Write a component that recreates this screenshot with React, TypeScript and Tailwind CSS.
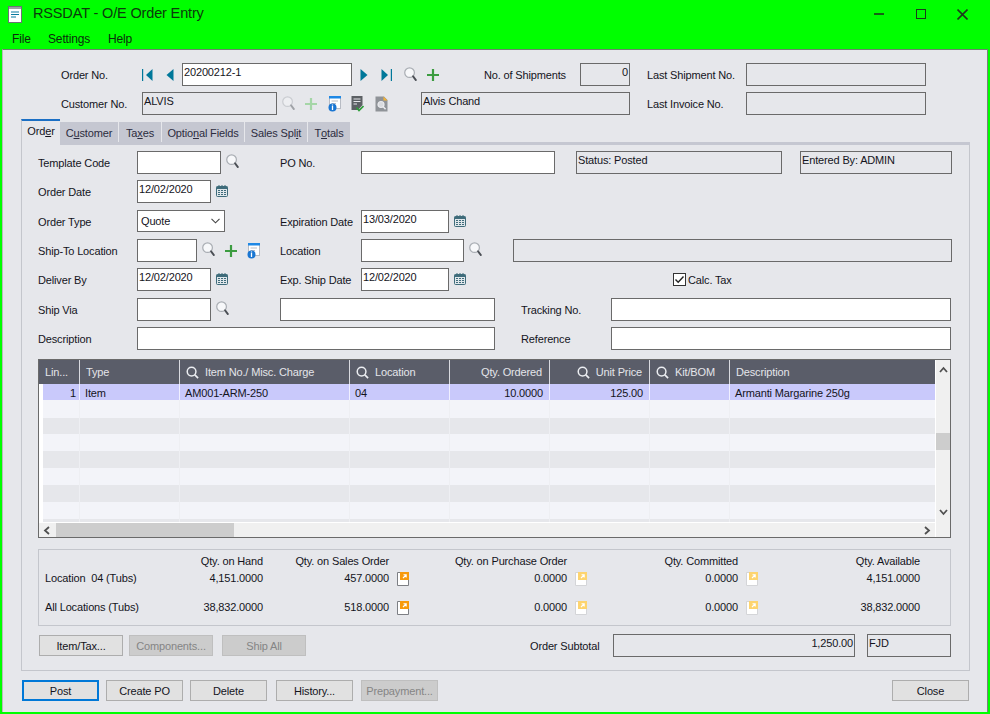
import React from "react";

const Search = ({ dim = false, className = "" }: { dim?: boolean; className?: string }) => (
  <svg width="13" height="15" viewBox="0 0 14 16" className={`shrink-0 ${className}`} style={{ opacity: dim ? 0.45 : 1 }}>
    <circle cx="6" cy="6" r="5.2" fill="#f7f8fa" stroke="#a9adb3" strokeWidth="1.3" />
    <path d="M9.8 10 L12.8 14" stroke="#4b4f55" strokeWidth="2" strokeLinecap="round" />
  </svg>
);
const Plus = ({ dim = false, className = "" }: { dim?: boolean; className?: string }) => (
  <svg width="12" height="12" viewBox="0 0 12 12" className={`shrink-0 ${className}`}>
    <path d="M6 0V12M0 6H12" stroke={dim ? "#a5d6a7" : "#3c9c40"} strokeWidth="2.2" />
  </svg>
);
const Info = ({ className = "" }: { className?: string }) => (
  <svg width="13" height="16" viewBox="0 0 13 16" className={`shrink-0 ${className}`}>
    <rect x="1.5" y="0.5" width="11" height="12" fill="#fff" stroke="#b8bcc4" />
    <rect x="1" y="0" width="12" height="2.5" fill="#1e88e5" />
    <path d="M3.5 5H10M3.5 7.5H8" stroke="#b9bdc4" />
    <circle cx="4.5" cy="11.5" r="4" fill="#1976d2" />
    <path d="M4.5 10V14M4.5 8.6V9.4" stroke="#fff" strokeWidth="1.3" />
  </svg>
);
const DocCheck = ({ className = "" }: { className?: string }) => (
  <svg width="13" height="16" viewBox="0 0 13 16" className={`shrink-0 ${className}`}>
    <path d="M0.5 0H11.5V9L7 14H0.5Z" fill="#5c6064" />
    <path d="M2.5 3H9.5M2.5 5.5H9.5M2.5 8H6" stroke="#e6e7eb" />
    <path d="M5.5 11.5L8 14.5L12.5 10" fill="none" stroke="#2e9e3a" strokeWidth="1.6" />
  </svg>
);
const DocSearch = ({ className = "" }: { className?: string }) => (
  <svg width="13" height="16" viewBox="0 0 13 16" className={`shrink-0 ${className}`}>
    <path d="M0.5 0.5H9L12.5 4V15.5H0.5Z" fill="#8f9398" />
    <path d="M8.5 0.5L12.5 4.5H8.5Z" fill="#f5b335" />
    <circle cx="6" cy="8.5" r="3" fill="#d9dbdf" stroke="#e9eaee" strokeWidth="1.2" />
    <path d="M8.2 10.8L10.6 13.2" stroke="#e9eaee" strokeWidth="1.6" />
  </svg>
);
const Calendar = ({ className = "" }: { className?: string }) => (
  <svg width="12" height="12" viewBox="0 0 12 12" className={`shrink-0 -mt-[2px] ${className}`}>
    <rect x="0.5" y="1.5" width="11" height="10" rx="1" fill="#dfe6ea" stroke="#3f6c7b" />
    <rect x="0.5" y="1.5" width="11" height="2.5" fill="#3f6c7b" />
    <path d="M3 0V2M6 0V2M9 0V2" stroke="#3f6c7b" />
    <path d="M2 5.5H4M5 5.5H7M8 5.5H10M2 7.5H4M5 7.5H7M8 7.5H10M2 9.5H4M5 9.5H7M8 9.5H10" stroke="#3f6c7b" />
  </svg>
);
const DocLink = ({ dim = false, className = "" }: { dim?: boolean; className?: string }) => (
  <svg width="12" height="14" viewBox="0 0 12 14" className={`shrink-0 ${className}`}>
    <path d="M0.5 0.5H11.5V13.5H0.5Z" fill="#fff" stroke={dim ? "#d4d5d8" : "#7d7f84"} />
    <rect x="3" y="0" width="9" height="8" fill={dim ? "#fdd46f" : "#f79a0c"} />
    <path d="M6 6L9 3M6.5 2.8H9.2V5.5" fill="none" stroke="#fff" strokeWidth="1.1" />
  </svg>
);
const Nav = ({ dir, bar = false, className = "" }: { dir: "l" | "r"; bar?: boolean; className?: string }) => (
  <svg width={bar ? 11 : 8} height="12" viewBox={bar ? "0 0 11 12" : "0 0 8 12"} className={`shrink-0 ${className}`}>
    {dir === "l" ? (
      bar ? (
        <>
          <rect x="0" y="0" width="1.2" height="12" fill="#00789a" />
          <path d="M10.5 0V12L4 6Z" fill="#00789a" />
        </>
      ) : (
        <path d="M7.5 0V12L0.5 6Z" fill="#00789a" />
      )
    ) : bar ? (
      <>
        <rect x="9.8" y="0" width="1.2" height="12" fill="#00789a" />
        <path d="M0.5 0V12L7 6Z" fill="#00789a" />
      </>
    ) : (
      <path d="M0.5 0V12L7.5 6Z" fill="#00789a" />
    )}
  </svg>
);

const Lbl = ({ className = "", children }: { className?: string; children?: React.ReactNode }) => (
  <div className={`shrink-0 h-[23px] pt-[2px] flex items-center whitespace-nowrap ${className}`}>{children}</div>
);
const Inp = ({ className = "", children }: { className?: string; children?: React.ReactNode }) => (
  <div className={`shrink-0 h-[23px] border border-[#6a6a6a] bg-white pl-[1px] leading-[17px] whitespace-nowrap overflow-hidden ${className}`}>{children}</div>
);
const RO = ({ className = "", children }: { className?: string; children?: React.ReactNode }) => (
  <div className={`shrink-0 h-[23px] border border-[#6a6a6a] pl-[1px] leading-[17px] whitespace-nowrap overflow-hidden ${className}`}>{children}</div>
);
const Btn = ({ className = "", off = false, focus = false, children }: { className?: string; off?: boolean; focus?: boolean; children?: React.ReactNode }) => (
  <div className={`shrink-0 w-[77px] h-[21px] pt-[2px] flex items-center justify-center whitespace-nowrap ${focus ? "bg-[#e1e1e1] border-2 border-[#0078d7]" : off ? "bg-[#cccccc] border border-[#bfbfbf] text-[#858585]" : "bg-[#e1e1e1] border border-[#adadad]"} ${className}`}>{children}</div>
);
const Tab = ({ className = "", children }: { className?: string; children?: React.ReactNode }) => (
  <div className={`shrink-0 h-[23px] pb-[1px] bg-[#c5c7d1] flex items-center justify-center whitespace-nowrap text-[#2c2c3e] ${className}`}>{children}</div>
);

const widths = ["w-[41px]", "w-[100px]", "w-[170px]", "w-[100px]", "w-[100px]", "w-[100px]", "w-[80px]", "w-[205px]"];
const HCell = ({ i, children, right = false, icon = false }: { i: number; children?: React.ReactNode; right?: boolean; icon?: boolean }) => (
  <div className={`${widths[i]} shrink-0 h-full border-r border-[#d9dae0] last:border-r-0 flex items-center text-[#e4e5ea] whitespace-nowrap ${right ? "justify-end pr-[7px]" : "pl-[6px]"}`}>
    {icon && (
      <svg width="13" height="13" viewBox="0 0 14 14" className="mr-[6px] shrink-0">
        <circle cx="6" cy="6" r="4.7" fill="none" stroke="#eceef2" strokeWidth="1.6" />
        <path d="M9.5 9.5L13 13" stroke="#eceef2" strokeWidth="1.8" />
      </svg>
    )}
    {children}
  </div>
);
const Row = ({ bg, h }: { bg: string; h: string }) => (
  <div className={`flex ${h}`}>
    <div className="w-[4px] shrink-0 bg-white" />
    <div className={`flex flex-1 ${bg}`}>
      <div className="w-[37px] shrink-0 border-r border-[#eeeff3]" />
      {[1, 2, 3, 4, 5, 6].map((i) => (
        <div key={i} className={`${widths[i]} shrink-0 border-r border-[#eeeff3]`} />
      ))}
    </div>
  </div>
);

const QtyRow = ({ label, vals, className = "" }: { label: string; vals: string[]; className?: string }) => (
  <div className={`flex h-[15px] items-center ${className}`}>
    <div className="w-[224px] pl-[6px] shrink-0 flex justify-between whitespace-pre">
      <span>{label}</span>
      <span>{vals[0]}</span>
    </div>
    <div className="w-[126px] text-right shrink-0">{vals[1]}</div>
    <DocLink className="ml-[8px]" />
    <div className="w-[158px] text-right shrink-0">{vals[2]}</div>
    <DocLink dim className="ml-[8px]" />
    <div className="w-[151px] text-right shrink-0">{vals[3]}</div>
    <DocLink dim className="ml-[8px]" />
    <div className="w-[162px] text-right shrink-0">{vals[4]}</div>
  </div>
);

export default function App() {
  return (
    <div className="w-[990px] h-[714px] bg-[#00ff00] flex flex-col overflow-hidden text-[11px] tracking-[-0.15px] text-[#14141c] [font-family:Liberation_Sans,Arial,sans-serif]">
      {/* Title */}
      <div className="h-[28px] shrink-0 flex items-center pl-[8px] text-[#0c3a0c]">
        <svg width="14" height="17" viewBox="0 0 14 17" className="shrink-0">
          <rect x="0.5" y="0.5" width="13" height="16" fill="#fff" stroke="#6d7275" />
          <rect x="1" y="1" width="12" height="2" fill="#9aa0a4" />
          <path d="M3 6H11M3 8.5H11M3 11H8" stroke="#0a7aa0" strokeWidth="1.2" />
        </svg>
        <span className="ml-[11px] text-[14.5px] leading-none pb-[1px]">RSSDAT - O/E Order Entry</span>
        <div className="ml-auto flex items-center pr-[22px]">
          <svg width="10" height="10" viewBox="0 0 10 10" className="mr-[32px]"><path d="M0 5H10" stroke="#1c3a1c" strokeWidth="1.6" /></svg>
          <svg width="10" height="10" viewBox="0 0 10 10" className="mr-[31px]"><rect x="0.5" y="0.5" width="9" height="9" fill="none" stroke="#1c3a1c" strokeWidth="1" /></svg>
          <svg width="11" height="11" viewBox="0 0 11 11"><path d="M0.5 0.5L10.5 10.5M10.5 0.5L0.5 10.5" stroke="#1c3a1c" strokeWidth="1.6" /></svg>
        </div>
      </div>
      {/* Menu */}
      <div className="h-[21px] shrink-0 flex items-center pl-[12px] text-[12px] text-[#0c2c0c]">
        <span className="w-[36px]">File</span>
        <span className="w-[60px]">Settings</span>
        <span>Help</span>
      </div>
      {/* Client */}
      <div className="h-[663px] ml-[2px] mr-[2px] shrink-0 bg-[#e6e7eb] border-t border-l border-r border-t-[#6f7f6f] border-l-[#b8bcb8] border-r-[#7c807c] flex flex-col">
        {/* Header row 1 */}
        <div className="flex mt-[13px] pl-[58px]">
          <Lbl className="w-[81px]">Order No.</Lbl>
          <div className="flex items-center h-[23px]">
            <Nav dir="l" bar />
            <Nav dir="l" className="ml-[13px]" />
          </div>
          <Inp className="ml-[8px] w-[170px]">20200212-1</Inp>
          <div className="flex items-center h-[23px]">
            <Nav dir="r" className="ml-[8px]" />
            <Nav dir="r" bar className="ml-[13px]" />
            <Search className="ml-[12px]" />
            <Plus className="ml-[10px]" />
          </div>
          <Lbl className="ml-[45px] w-[96px]">No. of Shipments</Lbl>
          <RO className="w-[50px] text-right pr-[1px]">0</RO>
          <Lbl className="ml-[17px] w-[99px]">Last Shipment No.</Lbl>
          <RO className="w-[180px]" />
        </div>
        {/* Header row 2 */}
        <div className="flex mt-[6px] pl-[58px]">
          <Lbl className="w-[81px]">Customer No.</Lbl>
          <RO className="w-[135px]">ALVIS</RO>
          <div className="flex items-center h-[23px]">
            <Search dim className="ml-[5px]" />
            <Plus dim className="ml-[10px]" />
            <Info className="ml-[11px]" />
            <DocCheck className="ml-[10px]" />
            <DocSearch className="ml-[11px]" />
          </div>
          <RO className="ml-[33px] w-[209px]">Alvis Chand</RO>
          <Lbl className="ml-[17px] w-[99px]">Last Invoice No.</Lbl>
          <RO className="w-[180px]" />
        </div>
        {/* Tabs */}
        <div className="flex items-end h-[26px] mt-[4px] ml-[18px] w-[949px]">
          <div className="w-[39px] h-[26px] pb-[3px] shrink-0 border-t-2 border-t-[#1b6fc4] border-l border-l-[#c4c6cc] flex items-center justify-center">
            <span>Ord<span className="underline">e</span>r</span>
          </div>
          <div className="flex-1 flex flex-col">
            <div className="flex items-start gap-[1px]">
              <Tab className="w-[58px]">C<span className="underline">u</span>stomer</Tab>
              <Tab className="w-[42px]">Ta<span className="underline">x</span>es</Tab>
              <Tab className="w-[82px]">Optio<span className="underline">n</span>al Fields</Tab>
              <Tab className="w-[62px]">Sales Spl<span className="underline">i</span>t</Tab>
              <Tab className="w-[42px]">T<span className="underline">o</span>tals</Tab>
            </div>
            <div className="h-[3px] bg-[#c5c7d1] -mt-[3px]" />
          </div>
        </div>
        {/* Panel */}
        <div className="ml-[18px] w-[949px] h-[526px] shrink-0 border-l border-r border-b border-[#c4c6cc] flex flex-col">
          <div className="flex mt-[6px] pl-[16px]">
            <Lbl className="w-[99px]">Template Code</Lbl>
            <Inp className="w-[84px]" />
            <div className="h-[23px] flex items-center w-[59px]"><Search className="ml-[5px] -mt-[2px]" /></div>
            <Lbl className="w-[81px]">PO No.</Lbl>
            <Inp className="w-[194px]" />
            <RO className="ml-[21px] w-[206px]">Status: Posted</RO>
            <RO className="ml-[18px] w-[152px]">Entered By: ADMIN</RO>
          </div>
          <div className="flex mt-[6px] pl-[16px]">
            <Lbl className="w-[99px]">Order Date</Lbl>
            <Inp className="w-[74px]">12/02/2020</Inp>
            <div className="h-[23px] flex items-center"><Calendar className="ml-[5px]" /></div>
          </div>
          <div className="flex mt-[7px] pl-[16px]">
            <Lbl className="w-[99px]">Order Type</Lbl>
            <div className="w-[88px] h-[22px] shrink-0 border border-[#6a6a6a] bg-white flex items-center justify-between pl-[3px] pr-[4px]">
              <span>Quote</span>
              <svg width="9" height="6" viewBox="0 0 9 6"><path d="M0.5 0.8L4.5 4.8L8.5 0.8" fill="none" stroke="#444" strokeWidth="1.1" /></svg>
            </div>
            <Lbl className="ml-[55px] w-[81px]">Expiration Date</Lbl>
            <Inp className="w-[88px]">13/03/2020</Inp>
            <div className="h-[23px] flex items-center"><Calendar className="ml-[5px]" /></div>
          </div>
          <div className="flex mt-[6px] pl-[16px]">
            <Lbl className="w-[99px]">Ship-To Location</Lbl>
            <Inp className="w-[60px]" />
            <div className="h-[23px] flex items-center w-[83px]">
              <Search className="ml-[5px] -mt-[2px]" />
              <Plus className="ml-[10px]" />
              <Info className="ml-[10px]" />
            </div>
            <Lbl className="w-[81px]">Location</Lbl>
            <Inp className="w-[103px]" />
            <div className="h-[23px] flex items-center w-[49px]"><Search className="ml-[5px] -mt-[2px]" /></div>
            <RO className="w-[439px]" />
          </div>
          <div className="flex mt-[6px] pl-[16px]">
            <Lbl className="w-[99px]">Deliver By</Lbl>
            <Inp className="w-[74px]">12/02/2020</Inp>
            <div className="h-[23px] flex items-center w-[69px]"><Calendar className="ml-[5px]" /></div>
            <Lbl className="w-[81px]">Exp. Ship Date</Lbl>
            <Inp className="w-[88px]">12/02/2020</Inp>
            <div className="h-[23px] flex items-center w-[224px]"><Calendar className="ml-[5px]" /></div>
            <div className="h-[23px] flex items-center">
              <svg width="13" height="13" viewBox="0 0 13 13" className="shrink-0">
                <rect x="0.5" y="0.5" width="12" height="12" fill="#fff" stroke="#333" />
                <path d="M2.5 6.5L5.2 9.3L10.5 3.5" fill="none" stroke="#222" strokeWidth="1.4" />
              </svg>
              <span className="ml-[2px] pt-[1px] whitespace-nowrap">Calc. Tax</span>
            </div>
          </div>
          <div className="flex mt-[7px] pl-[16px]">
            <Lbl className="w-[99px]">Ship Via</Lbl>
            <Inp className="w-[74px]" />
            <div className="h-[23px] flex items-center w-[69px]"><Search className="ml-[5px] -mt-[2px]" /></div>
            <Inp className="w-[215px]" />
            <Lbl className="ml-[26px] w-[90px]">Tracking No.</Lbl>
            <Inp className="w-[340px]" />
          </div>
          <div className="flex mt-[6px] pl-[16px]">
            <Lbl className="w-[99px]">Description</Lbl>
            <Inp className="w-[358px]" />
            <Lbl className="ml-[26px] w-[90px]">Reference</Lbl>
            <Inp className="w-[340px]" />
          </div>
          {/* Table */}
          <div className="mt-[9px] ml-[16px] w-[913px] h-[179px] shrink-0 border border-[#6a6a6a] flex">
            <div className="w-[896px] shrink-0 flex flex-col">
              <div className="h-[24px] shrink-0 bg-[#5a5d69] flex">
                <HCell i={0}>Lin...</HCell>
                <HCell i={1}>Type</HCell>
                <HCell i={2} icon>Item No./ Misc. Charge</HCell>
                <HCell i={3} icon>Location</HCell>
                <HCell i={4} right>Qty. Ordered</HCell>
                <HCell i={5} right icon>Unit Price</HCell>
                <HCell i={6} icon>Kit/BOM</HCell>
                <HCell i={7}>Description</HCell>
              </div>
              <div className="flex h-[16px] shrink-0 leading-[18px]">
                <div className="w-[4px] shrink-0 bg-white" />
                <div className="flex flex-1 bg-[#c9c9fb] items-center">
                  <div className="w-[37px] shrink-0 h-full border-r border-[#f0f0ff] text-right pr-[3px]">1</div>
                  <div className={`${widths[1]} shrink-0 h-full border-r border-[#f0f0ff] pl-[5px]`}>Item</div>
                  <div className={`${widths[2]} shrink-0 h-full border-r border-[#f0f0ff] pl-[5px]`}>AM001-ARM-250</div>
                  <div className={`${widths[3]} shrink-0 h-full border-r border-[#f0f0ff] pl-[5px]`}>04</div>
                  <div className={`${widths[4]} shrink-0 h-full border-r border-[#f0f0ff] text-right pr-[6px]`}>10.0000</div>
                  <div className={`${widths[5]} shrink-0 h-full border-r border-[#f0f0ff] text-right pr-[6px]`}>125.00</div>
                  <div className={`${widths[6]} shrink-0 h-full border-r border-[#f0f0ff]`} />
                  <div className="flex-1 h-full pl-[5px] whitespace-nowrap">Armanti Margarine 250g</div>
                </div>
              </div>
              <Row bg="bg-[#f3f4f9]" h="h-[18px]" />
              <Row bg="bg-[#e6e7eb]" h="h-[16px]" />
              <Row bg="bg-[#f3f4f9]" h="h-[17px]" />
              <Row bg="bg-[#e6e7eb]" h="h-[17px]" />
              <Row bg="bg-[#f3f4f9]" h="h-[17px]" />
              <Row bg="bg-[#e6e7eb]" h="h-[17px]" />
              <Row bg="bg-[#f3f4f9]" h="h-[17px]" />
              <Row bg="bg-[#e6e7eb]" h="h-[3px]" />
              <div className="h-[1px] bg-white shrink-0" />
              <div className="flex-1 bg-[#f0f0f0] flex items-center">
                <svg width="8" height="9" viewBox="0 0 8 9" className="ml-[4px] shrink-0"><path d="M6 1L2 4.5L6 8" fill="none" stroke="#505050" strokeWidth="1.8" /></svg>
                <div className="ml-[5px] w-[178px] h-full bg-[#cdcdcd]" />
                <svg width="8" height="9" viewBox="0 0 8 9" className="ml-auto mr-[4px] shrink-0"><path d="M2 1L6 4.5L2 8" fill="none" stroke="#505050" strokeWidth="1.8" /></svg>
              </div>
            </div>
            <div className="flex-1 bg-[#f0f0f0] border-l border-white flex flex-col items-center">
              <svg width="9" height="8" viewBox="0 0 9 8" className="mt-[6px] shrink-0"><path d="M1 6L4.5 2L8 6" fill="none" stroke="#505050" strokeWidth="1.8" /></svg>
              <div className="mt-[59px] w-full h-[17px] bg-[#cdcdcd] shrink-0" />
              <svg width="9" height="8" viewBox="0 0 9 8" className="mt-[58px] shrink-0"><path d="M1 2L4.5 6L8 2" fill="none" stroke="#505050" strokeWidth="1.8" /></svg>
            </div>
          </div>
          {/* Qty box */}
          <div className="mt-[11px] ml-[16px] w-[913px] h-[77px] shrink-0 border border-[#c4c6cc] pt-[4px]">
            <div className="flex h-[15px] items-center whitespace-nowrap">
              <div className="w-[224px] shrink-0 text-right">Qty. on Hand</div>
              <div className="w-[126px] shrink-0 text-right">Qty. on Sales Order</div>
              <div className="w-[178px] shrink-0 text-right">Qty. on Purchase Order</div>
              <div className="w-[171px] shrink-0 text-right">Qty. Committed</div>
              <div className="w-[182px] shrink-0 text-right">Qty. Available</div>
            </div>
            <QtyRow className="mt-[2px]" label="Location  04 (Tubs)" vals={["4,151.0000", "457.0000", "0.0000", "0.0000", "4,151.0000"]} />
            <QtyRow className="mt-[14px]" label="All Locations (Tubs)" vals={["38,832.0000", "518.0000", "0.0000", "0.0000", "38,832.0000"]} />
          </div>
          {/* Item buttons */}
          <div className="flex mt-[8px] ml-[16px] h-[23px]">
            <Btn className="w-[84px] ml-[1px] mt-[1px]">Item/Tax...</Btn>
            <Btn off className="w-[84px] ml-[6px] mt-[1px]">Components...</Btn>
            <Btn off className="w-[84px] ml-[9px] mt-[1px]">Ship All</Btn>
            <Lbl className="ml-[224px] w-[83px]">Order Subtotal</Lbl>
            <RO className="w-[242px] text-right pr-[1px]">1,250.00</RO>
            <RO className="ml-[12px] w-[84px]">FJD</RO>
          </div>
        </div>
        {/* Bottom buttons */}
        <div className="flex mt-[9px] ml-[19px]">
          <Btn focus>Post</Btn>
          <Btn className="ml-[7px]">Create PO</Btn>
          <Btn className="ml-[7px]">Delete</Btn>
          <Btn className="ml-[9px]">History...</Btn>
          <Btn off className="ml-[8px]">Prepayment...</Btn>
          <Btn className="ml-[454px]">Close</Btn>
        </div>
      </div>
    </div>
  );
}
